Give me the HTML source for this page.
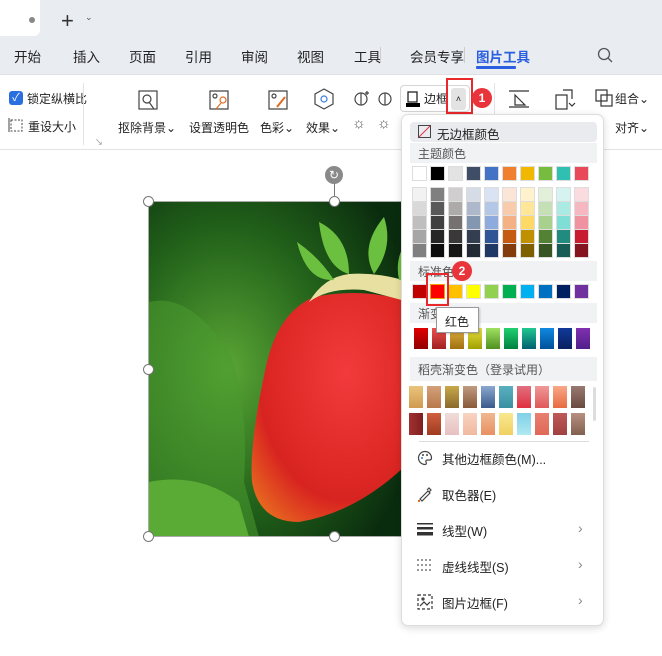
<!DOCTYPE html>
<html><head><meta charset="utf-8"><style>
*{box-sizing:border-box;margin:0;padding:0}
body{width:662px;height:656px;overflow:hidden;background:#fff;font-family:"Liberation Sans","Noto Sans CJK SC",sans-serif;font-size:13px;color:#222;position:relative}
.a{position:absolute}
.top{left:0;top:0;width:662px;height:74px;background:#e9ecf1}
.tab{left:-6px;top:0;width:46px;height:36px;background:#fff;border-radius:0 0 6px 0}
.menu span{position:absolute;top:46px;font-size:13.5px;color:#222}
.ribbon{left:0;top:74px;width:662px;height:76px;background:#fff;border-top:1px solid #dde0e5;border-bottom:1px solid #e3e3e3}
.t{position:absolute;font-size:12px;color:#222;white-space:nowrap}
.panel{left:401px;top:114px;width:203px;height:512px;background:#fff;border:1px solid #ddd;border-radius:7px;box-shadow:0 2px 8px rgba(0,0,0,.15)}
.sec{position:absolute;left:8px;width:187px;height:20px;background:#f1f2f4;color:#555;font-size:12px;padding:2px 0 0 8px}
.row{position:absolute;left:11px;display:flex;gap:5px}
.row div{width:13px;height:13px;outline:1px solid #ddd}
.mi{position:absolute;left:16px;font-size:12.5px;color:#222}
.chev{position:absolute;left:176px;color:#888;font-size:14px}
.handle{position:absolute;width:11px;height:11px;border:1px solid #777;border-radius:50%;background:#fff}
</style></head><body>
<div class="a top"></div>
<div class="a tab"></div>
<div class="a" style="left:29px;top:17px;width:6px;height:6px;border-radius:50%;background:#888"></div>
<div class="a" style="left:61px;top:8px;font-size:22px;color:#333">+</div>
<div class="a" style="left:85px;top:12px;font-size:9px;color:#555">⌄</div>
<div class="menu">
<span style="left:14px">开始</span><span style="left:73px">插入</span><span style="left:129px">页面</span><span style="left:185px">引用</span><span style="left:241px">审阅</span><span style="left:297px">视图</span><span style="left:354px">工具</span><span style="left:410px">会员专享</span>
<span style="left:476px;color:#2a5fe0;font-weight:bold">图片工具</span>
</div>
<div class="a" style="left:380px;top:47px;width:1px;height:16px;background:#ccc"></div>
<div class="a" style="left:464px;top:47px;width:1px;height:16px;background:#ccc"></div>
<div class="a" style="left:476px;top:66px;width:40px;height:3px;background:#2a5fe0;border-radius:1px"></div>
<svg class="a" style="left:596px;top:46px" width="20" height="20"><circle cx="8" cy="8" r="5.5" fill="none" stroke="#555" stroke-width="1.3"/><line x1="12" y1="12" x2="16" y2="16" stroke="#555" stroke-width="1.3"/></svg>

<div class="a ribbon">
<div class="a" style="left:9px;top:16px;width:14px;height:14px;background:#2a6fe0;border-radius:3px;color:#fff;font-size:11px;text-align:center;line-height:14px">✓</div>
<div class="t" style="left:27px;top:15px">锁定纵横比</div>
<svg class="a" style="left:8px;top:42px" width="16" height="16"><rect x="3" y="3" width="11" height="11" fill="none" stroke="#444" stroke-dasharray="2 1.5"/><path d="M1 1v14" stroke="#444"/></svg>
<div class="t" style="left:28px;top:43px">重设大小</div>
<div class="a" style="left:95px;top:62px;font-size:8px;color:#888">↘</div>
<div class="a" style="left:83px;top:8px;width:1px;height:62px;background:#e3e3e3"></div>
<svg class="a" style="left:137px;top:14px" width="22" height="22" fill="none" stroke="#444" stroke-width="1.2"><rect x="2" y="2" width="18" height="18"/><circle cx="10" cy="10" r="4"/><path d="M12 13l5 7"/></svg>
<svg class="a" style="left:208px;top:14px" width="22" height="22" fill="none" stroke-width="1.2"><path d="M2 2h18v18H2z" stroke="#444"/><circle cx="7" cy="7" r="2" stroke="#444"/><circle cx="15" cy="11" r="3" stroke="#e06a20"/><path d="M13 14l-5 6" stroke="#e06a20"/></svg>
<svg class="a" style="left:267px;top:14px" width="22" height="22" fill="none" stroke-width="1.2"><path d="M2 2h18v18H2z" stroke="#444"/><circle cx="7" cy="7" r="2" stroke="#444"/><path d="M18 8l-8 10" stroke="#e06a20" stroke-width="2"/></svg>
<svg class="a" style="left:312px;top:12px" width="24" height="24" fill="none" stroke="#444" stroke-width="1.2"><path d="M12 2l9 5v10l-9 5-9-5V7z"/><circle cx="12" cy="12" r="3" stroke="#3a7be0"/></svg>
<svg class="a" style="left:352px;top:14px" width="20" height="20" fill="none" stroke="#444" stroke-width="1.2"><circle cx="9" cy="10" r="6"/><path d="M9 4v12" /><path d="M15 2v4M13 4h4"/></svg>
<svg class="a" style="left:376px;top:14px" width="20" height="20" fill="none" stroke="#444" stroke-width="1.2"><circle cx="9" cy="10" r="6"/><path d="M9 4v12"/></svg>
<div class="t" style="left:118px;top:44px">抠除背景⌄</div>
<div class="t" style="left:189px;top:44px">设置透明色</div>
<div class="t" style="left:260px;top:44px">色彩⌄</div>
<div class="t" style="left:306px;top:44px">效果⌄</div>
<div class="t" style="left:352px;top:40px;color:#555;font-size:15px">☼</div>
<div class="t" style="left:377px;top:40px;color:#555;font-size:15px">☼</div>
<div class="a" style="left:400px;top:10px;width:70px;height:27px;border:1px solid #d5d5d5;border-radius:4px"></div>
<svg class="a" style="left:405px;top:15px" width="16" height="18"><rect x="3" y="2" width="9" height="10" fill="none" stroke="#222" stroke-width="1.3"/><rect x="1" y="13" width="14" height="4" fill="#000"/></svg>
<div class="t" style="left:424px;top:15px">边框</div>
<div class="a" style="left:451px;top:13px;width:15px;height:22px;background:#e3e3e3;border-radius:3px;font-size:9px;text-align:center;line-height:22px">˄</div>
<div class="a" style="left:446px;top:3px;width:27px;height:36px;border:2px solid #e8282a"></div>
<div class="a" style="left:472px;top:13px;width:20px;height:20px;border-radius:50%;background:#e8343a;color:#fff;font-size:12px;text-align:center;line-height:20px;font-weight:bold">1</div>
<div class="a" style="left:494px;top:8px;width:1px;height:62px;background:#e3e3e3"></div>
<svg class="a" style="left:507px;top:14px" width="24" height="20" fill="none" stroke="#333" stroke-width="1.2"><path d="M2 2h20M2 18h20M8 6l10 10H8z"/></svg>
<svg class="a" style="left:554px;top:12px" width="22" height="24" fill="none" stroke="#333" stroke-width="1.2"><rect x="2" y="8" width="11" height="14"/><path d="M9 3h9v9M15 16l3 3 3-3"/></svg>
<svg class="a" style="left:594px;top:13px" width="20" height="20" fill="none" stroke="#333" stroke-width="1.2"><rect x="2" y="2" width="11" height="11"/><rect x="7" y="7" width="11" height="11"/></svg>
<div class="t" style="left:615px;top:15px">组合⌄</div>
<div class="t" style="left:615px;top:44px">对齐⌄</div>
</div>

<!-- image -->
<svg class="a" style="left:149px;top:202px" width="260" height="335">
<defs>
<radialGradient id="bg" cx="0.3" cy="0.5" r="0.75"><stop offset="0" stop-color="#5aa535"/><stop offset="0.55" stop-color="#22621a"/><stop offset="1" stop-color="#0a2c0e"/></radialGradient>
<radialGradient id="sb" cx="0.6" cy="0.35" r="0.8"><stop offset="0" stop-color="#f23a3c"/><stop offset="0.7" stop-color="#d82420"/><stop offset="1" stop-color="#e86a20"/></radialGradient>
</defs>
<rect width="260" height="335" fill="url(#bg)"/>
<path d="M0 100 Q40 90 80 150 Q100 200 95 280 L110 335 L0 335z" fill="#4a9a30" opacity=".55"/>
<path d="M0 280 Q50 270 90 300 L100 335 L0 335z" fill="#5aab35"/>
<path d="M165 95 Q130 110 118 160 Q100 240 103 280 Q110 320 150 320 Q210 310 260 260 L260 100 Q215 85 165 95z" fill="url(#sb)"/>
<path d="M160 100 Q180 85 215 88 L260 100 L260 80 Q230 70 200 72 Q175 75 160 100z" fill="#e8e0a0"/>
<path d="M148 40 Q158 80 185 78 Q170 55 148 40z M170 20 Q175 65 200 72 Q200 35 170 20z M235 15 Q210 45 225 72 Q245 45 235 15z M260 35 Q245 55 250 78 L260 78z" fill="#6cc040"/>
</svg>
<div class="a" style="left:148px;top:201px;width:262px;height:336px;border:1px solid #aaa;border-right:none"></div>
<div class="handle" style="left:143px;top:196px"></div>
<div class="handle" style="left:329px;top:196px"></div>
<div class="handle" style="left:143px;top:364px"></div>
<div class="handle" style="left:143px;top:531px"></div>
<div class="handle" style="left:329px;top:531px"></div>
<div class="a" style="left:334px;top:182px;width:1px;height:14px;background:#777"></div>
<div class="a" style="left:325px;top:166px;width:18px;height:18px;border-radius:50%;background:#8a8a8a;color:#fff;font-size:12px;text-align:center;line-height:18px">↻</div>

<!-- panel -->
<div class="a panel">
<div class="a" style="left:8px;top:7px;width:187px;height:20px;background:#e9ebef;border-radius:4px"></div>
<svg class="a" style="left:16px;top:10px" width="13" height="13"><rect x=".5" y=".5" width="12" height="12" fill="none" stroke="#444"/><line x1="1" y1="12" x2="12" y2="1" stroke="#e0304a"/></svg>
<div class="a" style="left:35px;top:9px;font-size:12.5px">无边框颜色</div>
<div class="sec" style="top:28px">主题颜色</div>
<div class="row" style="top:52px"><div style="background:#fff"></div><div style="background:#000"></div><div style="background:#e3e3e3"></div><div style="background:#3f4e66"></div><div style="background:#4472c4"></div><div style="background:#f08030"></div><div style="background:#f2b800"></div><div style="background:#77bc3f"></div><div style="background:#2fc0b2"></div><div style="background:#e84a5a"></div></div>
<div class="row" style="top:73px"><div style="background:#f2f2f2"></div><div style="background:#808080"></div><div style="background:#d0cece"></div><div style="background:#d6dce5"></div><div style="background:#dae3f3"></div><div style="background:#fbe5d6"></div><div style="background:#fff2cc"></div><div style="background:#e2f0d9"></div><div style="background:#d5f4f1"></div><div style="background:#fadbe0"></div></div>
<div class="row" style="top:87px"><div style="background:#d9d9d9"></div><div style="background:#595959"></div><div style="background:#aeaaaa"></div><div style="background:#adb9ca"></div><div style="background:#b4c7e7"></div><div style="background:#f8cbad"></div><div style="background:#ffe699"></div><div style="background:#c5e0b4"></div><div style="background:#abe9e3"></div><div style="background:#f5b8c0"></div></div>
<div class="row" style="top:101px"><div style="background:#bfbfbf"></div><div style="background:#404040"></div><div style="background:#757171"></div><div style="background:#8497b0"></div><div style="background:#8faadc"></div><div style="background:#f4b183"></div><div style="background:#ffd966"></div><div style="background:#a9d18e"></div><div style="background:#7fdfd6"></div><div style="background:#f0929f"></div></div>
<div class="row" style="top:115px"><div style="background:#a6a6a6"></div><div style="background:#262626"></div><div style="background:#3a3838"></div><div style="background:#333f50"></div><div style="background:#2f5597"></div><div style="background:#c55a11"></div><div style="background:#bf9000"></div><div style="background:#548235"></div><div style="background:#228b80"></div><div style="background:#c81d31"></div></div>
<div class="row" style="top:129px"><div style="background:#808080"></div><div style="background:#0d0d0d"></div><div style="background:#171616"></div><div style="background:#222a35"></div><div style="background:#1f3864"></div><div style="background:#843c0c"></div><div style="background:#7f6000"></div><div style="background:#375623"></div><div style="background:#175d55"></div><div style="background:#861320"></div></div>
<div class="sec" style="top:146px">标准色</div>
<div class="row" style="top:170px"><div style="background:#c00000"></div><div style="background:#ff0000;outline:1px solid #f0a000"></div><div style="background:#ffc000"></div><div style="background:#ffff00"></div><div style="background:#92d050"></div><div style="background:#00b050"></div><div style="background:#00b0f0"></div><div style="background:#0070c0"></div><div style="background:#002060"></div><div style="background:#7030a0"></div></div>
<div class="sec" style="top:188px">渐变</div>
<div class="row" style="top:213px;gap:4px;left:12px"><div style="height:21px;width:14px;outline:none;background:linear-gradient(#e00000,#900000)"></div><div style="height:21px;width:14px;outline:none;background:linear-gradient(#ee5050,#a02020)"></div><div style="height:21px;width:14px;outline:none;background:linear-gradient(#e0b040,#a07010)"></div><div style="height:21px;width:14px;outline:none;background:linear-gradient(#e8e040,#a0a000)"></div><div style="height:21px;width:14px;outline:none;background:linear-gradient(#a0e060,#509020)"></div><div style="height:21px;width:14px;outline:none;background:linear-gradient(#20d070,#008040)"></div><div style="height:21px;width:14px;outline:none;background:linear-gradient(#20c890,#006070)"></div><div style="height:21px;width:14px;outline:none;background:linear-gradient(#1088e0,#00509a)"></div><div style="height:21px;width:14px;outline:none;background:linear-gradient(#103a98,#0a2060)"></div><div style="height:21px;width:14px;outline:none;background:linear-gradient(#8030b0,#50208a)"></div></div>
<div class="sec" style="top:242px;height:24px;padding-top:4px">稻壳渐变色（登录试用）</div>
<div class="row" style="top:271px;left:7px;gap:4px"><div style="height:22px;width:14px;outline:none;background:linear-gradient(#eac47c,#d09a50)"></div><div style="height:22px;width:14px;outline:none;background:linear-gradient(#d4a07a,#b8784a)"></div><div style="height:22px;width:14px;outline:none;background:linear-gradient(#c8a84a,#8a6a2a)"></div><div style="height:22px;width:14px;outline:none;background:linear-gradient(#c09a80,#8a5a3a)"></div><div style="height:22px;width:14px;outline:none;background:linear-gradient(#8aa8d0,#3a5a8a)"></div><div style="height:22px;width:14px;outline:none;background:linear-gradient(#5ab0c0,#3a90a0)"></div><div style="height:22px;width:14px;outline:none;background:linear-gradient(#e07080,#e03040)"></div><div style="height:22px;width:14px;outline:none;background:linear-gradient(#f09898,#e05858)"></div><div style="height:22px;width:14px;outline:none;background:linear-gradient(#f8a888,#e86a40)"></div><div style="height:22px;width:14px;outline:none;background:linear-gradient(#9a7a70,#6a4a40)"></div></div>
<div class="row" style="top:298px;left:7px;gap:4px"><div style="height:22px;width:14px;outline:none;background:linear-gradient(90deg,#a03030,#802020)"></div><div style="height:22px;width:14px;outline:none;background:linear-gradient(#d06040,#a03a20)"></div><div style="height:22px;width:14px;outline:none;background:linear-gradient(#f0dcd8,#e8c0c0)"></div><div style="height:22px;width:14px;outline:none;background:linear-gradient(#f8d4c0,#f0b8a0)"></div><div style="height:22px;width:14px;outline:none;background:linear-gradient(#f0b890,#e89060)"></div><div style="height:22px;width:14px;outline:none;background:linear-gradient(#f8e890,#f0d060)"></div><div style="height:22px;width:14px;outline:none;background:linear-gradient(#80d0e8,#b0e8f0)"></div><div style="height:22px;width:14px;outline:none;background:linear-gradient(#e88070,#e06858)"></div><div style="height:22px;width:14px;outline:none;background:linear-gradient(#c05858,#a04040)"></div><div style="height:22px;width:14px;outline:none;background:linear-gradient(#b89080,#806050)"></div></div>
<div class="a" style="left:191px;top:272px;width:3px;height:34px;background:#ddd;border-radius:2px"></div>
<div class="a" style="left:17px;top:326px;width:170px;height:1px;background:#ddd"></div>
<svg class="a" style="left:15px;top:335px" width="16" height="16" fill="none" stroke="#444" stroke-width="1.2"><path d="M8 1.5a6.5 6.5 0 1 0 0 13c1.5 0 1.5-1.5 1-2.5s0-2 1.5-2H13a2 2 0 0 0 1.5-2A6.5 6.5 0 0 0 8 1.5z"/><circle cx="5" cy="8" r="1" fill="#3a7be0" stroke="none"/><circle cx="6" cy="5" r="1" fill="#444" stroke="none"/><circle cx="10" cy="5" r="1" fill="#444" stroke="none"/></svg>
<div class="mi" style="left:40px;top:334px">其他边框颜色(M)...</div>
<svg class="a" style="left:15px;top:371px" width="16" height="16" fill="none" stroke="#444" stroke-width="1.2"><path d="M3 13l8-8 2 2-8 8zM10 4l2-2 2 2-2 2"/><rect x="1" y="14" width="2" height="2" fill="#e06a20" stroke="none"/></svg>
<div class="mi" style="left:40px;top:370px">取色器(E)</div>
<svg class="a" style="left:15px;top:407px" width="16" height="14"><rect y="1" width="16" height="1.5" fill="#333"/><rect y="5" width="16" height="2.5" fill="#333"/><rect y="10" width="16" height="3.5" fill="#333"/></svg>
<div class="mi" style="left:40px;top:406px">线型(W)</div><div class="chev" style="top:405px">›</div>
<svg class="a" style="left:15px;top:443px" width="16" height="14" stroke="#333" stroke-dasharray="2 2"><line y1="2" x2="16" y2="2"/><line y1="7" x2="16" y2="7"/><line y1="12" x2="16" y2="12"/></svg>
<div class="mi" style="left:40px;top:442px">虚线线型(S)</div><div class="chev" style="top:441px">›</div>
<svg class="a" style="left:15px;top:479px" width="16" height="16" fill="none" stroke="#333" stroke-width="1.2"><rect x="1" y="1" width="14" height="14" stroke-dasharray="3 2"/><path d="M3 12l4-4 3 3 3-3"/><circle cx="6" cy="5" r="1"/></svg>
<div class="mi" style="left:40px;top:478px">图片边框(F)</div><div class="chev" style="top:477px">›</div>
</div>

<div class="a" style="left:426px;top:273px;width:23px;height:33px;border:2px solid #e8282a"></div>
<div class="a" style="left:452px;top:261px;width:20px;height:20px;border-radius:50%;background:#e8343a;color:#fff;font-size:12px;text-align:center;line-height:20px;font-weight:bold">2</div>
<div class="a" style="left:436px;top:307px;width:43px;height:26px;background:#fff;border:1px solid #999;font-size:12px;padding:5px 0 0 8px;box-shadow:1px 1px 2px rgba(0,0,0,.2)">红色</div>
</body></html>
